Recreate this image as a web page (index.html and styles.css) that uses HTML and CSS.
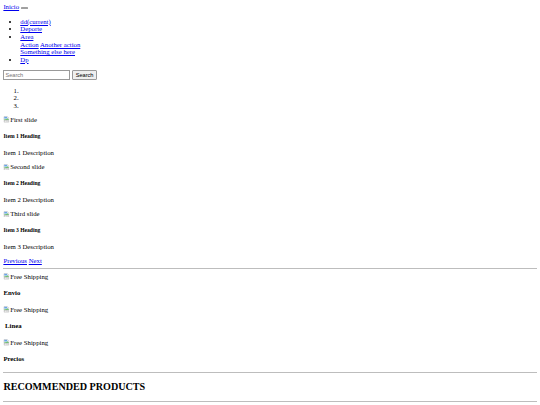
FILE: index.html
```html
<!DOCTYPE html>
<html>
<head>
<meta charset="utf-8">
<title>Inicio</title>
<link rel="stylesheet" href="styles.css">
</head>
<body class="body">
<nav class="navbar">
  <div class="navbar-top">
    <a class="navbar-brand" href="#">Inicio</a>
    <button class="navbar-toggler" type="button"><span class="navbar-toggler-icon"></span></button>
  </div>
  <div class="navbar-collapse">
    <ul class="navbar-nav">
      <li class="nav-item"><a class="nav-link" href="#">dd<span class="sr-only">(current)</span></a></li>
      <li class="nav-item"><a class="nav-link" href="#">Deporte </a></li>
      <li class="nav-item"><a class="nav-link" href="#">Area</a>
        <div class="dropdown-menu">
          <a class="dropdown-item" href="#">Action</a>
          <a class="dropdown-item" href="#">Another action</a>
          <div class="dropdown-divider"></div>
          <a class="dropdown-item" href="#">Something else here</a>
        </div>
      </li>
      <li class="nav-item"><a class="nav-link" href="#">Dp</a></li>
    </ul>
    <form class="search-form">
      <input class="search-input" type="search" placeholder="Search">
      <button class="search-btn" type="submit">Search</button>
    </form>
  </div>
</nav>

<div class="carousel">
  <ol class="carousel-indicators">
    <li></li>
    <li></li>
    <li></li>
  </ol>
  <div class="carousel-inner">
    <div class="carousel-item">
      <div class="broken"><svg class="broken-icon" viewBox="0 0 16 16"><path d="M2.5 1.5h8l3 3v5l-2 1.5-2-1.5-2 1.5-2-1.5-3 1.5z" fill="#fff" stroke="#999"/><rect x="3" y="2" width="7" height="4" fill="#6aa6e8"/><path d="M3 9l2.5-2.5 2 1.5 2.5-2.5 3.5 3v0.5l-1.5 1-2-1.5-2 1.5-2-1.5-3 1.5z" fill="#4caf50"/><path d="M2.5 12.5l3-1.5 2 1.5 2-1.5 2 1.5 2-1.5v3.5h-11z" fill="#fff" stroke="#999"/></svg>First slide</div>
      <div class="carousel-caption">
        <h5 class="caption-title">Item 1 Heading</h5>
        <p class="caption-text">Item 1 Description</p>
      </div>
    </div>
    <div class="carousel-item">
      <div class="broken"><svg class="broken-icon" viewBox="0 0 16 16"><path d="M2.5 1.5h8l3 3v5l-2 1.5-2-1.5-2 1.5-2-1.5-3 1.5z" fill="#fff" stroke="#999"/><rect x="3" y="2" width="7" height="4" fill="#6aa6e8"/><path d="M3 9l2.5-2.5 2 1.5 2.5-2.5 3.5 3v0.5l-1.5 1-2-1.5-2 1.5-2-1.5-3 1.5z" fill="#4caf50"/><path d="M2.5 12.5l3-1.5 2 1.5 2-1.5 2 1.5 2-1.5v3.5h-11z" fill="#fff" stroke="#999"/></svg>Second slide</div>
      <div class="carousel-caption">
        <h5 class="caption-title">Item 2 Heading</h5>
        <p class="caption-text">Item 2 Description</p>
      </div>
    </div>
    <div class="carousel-item">
      <div class="broken"><svg class="broken-icon" viewBox="0 0 16 16"><path d="M2.5 1.5h8l3 3v5l-2 1.5-2-1.5-2 1.5-2-1.5-3 1.5z" fill="#fff" stroke="#999"/><rect x="3" y="2" width="7" height="4" fill="#6aa6e8"/><path d="M3 9l2.5-2.5 2 1.5 2.5-2.5 3.5 3v0.5l-1.5 1-2-1.5-2 1.5-2-1.5-3 1.5z" fill="#4caf50"/><path d="M2.5 12.5l3-1.5 2 1.5 2-1.5 2 1.5 2-1.5v3.5h-11z" fill="#fff" stroke="#999"/></svg>Third slide</div>
      <div class="carousel-caption">
        <h5 class="caption-title">Item 3 Heading</h5>
        <p class="caption-text">Item 3 Description</p>
      </div>
    </div>
  </div>
  <div class="carousel-controls">
    <a class="carousel-control" href="#">Previous</a>
    <a class="carousel-control" href="#">Next</a>
  </div>
</div>

<hr class="rule">

<div class="features">
  <div class="feature">
    <div class="broken"><svg class="broken-icon" viewBox="0 0 16 16"><path d="M2.5 1.5h8l3 3v5l-2 1.5-2-1.5-2 1.5-2-1.5-3 1.5z" fill="#fff" stroke="#999"/><rect x="3" y="2" width="7" height="4" fill="#6aa6e8"/><path d="M3 9l2.5-2.5 2 1.5 2.5-2.5 3.5 3v0.5l-1.5 1-2-1.5-2 1.5-2-1.5-3 1.5z" fill="#4caf50"/><path d="M2.5 12.5l3-1.5 2 1.5 2-1.5 2 1.5 2-1.5v3.5h-11z" fill="#fff" stroke="#999"/></svg>Free Shipping</div>
    <h4 class="feature-title">Envio</h4>
  </div>
  <div class="feature">
    <div class="broken"><svg class="broken-icon" viewBox="0 0 16 16"><path d="M2.5 1.5h8l3 3v5l-2 1.5-2-1.5-2 1.5-2-1.5-3 1.5z" fill="#fff" stroke="#999"/><rect x="3" y="2" width="7" height="4" fill="#6aa6e8"/><path d="M3 9l2.5-2.5 2 1.5 2.5-2.5 3.5 3v0.5l-1.5 1-2-1.5-2 1.5-2-1.5-3 1.5z" fill="#4caf50"/><path d="M2.5 12.5l3-1.5 2 1.5 2-1.5 2 1.5 2-1.5v3.5h-11z" fill="#fff" stroke="#999"/></svg>Free Shipping</div>
    <h4 class="feature-title">&nbsp;Linea</h4>
  </div>
  <div class="feature">
    <div class="broken"><svg class="broken-icon" viewBox="0 0 16 16"><path d="M2.5 1.5h8l3 3v5l-2 1.5-2-1.5-2 1.5-2-1.5-3 1.5z" fill="#fff" stroke="#999"/><rect x="3" y="2" width="7" height="4" fill="#6aa6e8"/><path d="M3 9l2.5-2.5 2 1.5 2.5-2.5 3.5 3v0.5l-1.5 1-2-1.5-2 1.5-2-1.5-3 1.5z" fill="#4caf50"/><path d="M2.5 12.5l3-1.5 2 1.5 2-1.5 2 1.5 2-1.5v3.5h-11z" fill="#fff" stroke="#999"/></svg>Free Shipping</div>
    <h4 class="feature-title">Precios</h4>
  </div>
</div>

<hr class="rule">
<h2 class="section-title">RECOMMENDED PRODUCTS</h2>
<hr class="rule">
</body>
</html>
```

FILE: styles.css
```css
html {
  background: #fff;
}

.body {
  margin: 3.375px;
  font-family: "Liberation Serif", "Times New Roman", serif;
  font-size: 6.75px;
  line-height: 7.6px;
  color: #000;
}

a {
  color: #0000ee;
  text-decoration: underline;
  text-decoration-thickness: 0.5px;
  text-underline-offset: 1px;
}

.navbar-top {
  display: flex;
  align-items: center;
  gap: 1.7px;
  height: 7.6px;
}

.navbar-toggler {
  display: block;
  width: 7px;
  height: 2.6px;
  padding: 0;
  margin: 0;
  margin-top: 1.5px;
  border: 0.5px solid #a0a0a0;
  border-radius: 0.5px;
  background: #e9e9e9;
}

.navbar-toggler-icon {
  display: none;
}

.navbar-nav {
  margin: 6.75px 0;
  padding-left: 16.9px;
  list-style: disc;
}

.dropdown-divider {
  height: 0;
}

.search-form {
  display: flex;
  align-items: center;
  gap: 2.4px;
  height: 10px;
  margin: 0;
}

.search-input {
  box-sizing: border-box;
  width: 66.5px;
  height: 9.4px;
  margin: 0;
  padding: 0 1px;
  font-family: "Liberation Sans", Arial, sans-serif;
  font-size: 5.63px;
  border: 0.6px solid #9a9a9a;
  background: #fff;
}

.search-input::placeholder {
  color: #757575;
}

.search-btn {
  box-sizing: border-box;
  width: 24.6px;
  height: 9.4px;
  margin: 0;
  padding: 0;
  font-family: "Liberation Sans", Arial, sans-serif;
  font-size: 5.63px;
  color: #000;
  border: 0.6px solid #9a9a9a;
  border-radius: 1px;
  background: #efefef;
}

.carousel-indicators {
  margin: 6.75px 0;
  padding-left: 16.9px;
  line-height: 7.5px;
}

.broken {
  display: flex;
  align-items: center;
  height: 7.6px;
}

.broken-icon {
  width: 6.75px;
  height: 6.75px;
  flex: none;
}

.caption-title {
  font-size: 5.6px;
  line-height: 6.44px;
  margin: 9.36px 0;
  font-weight: bold;
}

.caption-text {
  margin: 6.75px 0;
}

.feature-title {
  font-size: 6.75px;
  line-height: 7.6px;
  margin: 8.98px 0;
  font-weight: bold;
}

.rule {
  margin: 3.375px 0;
  height: 0;
  border: none;
  border-top: 0.9px solid #bdbdbd;
}

.section-title {
  font-size: 10.125px;
  line-height: 11.6px;
  margin: 8.4px 0;
  font-weight: bold;
}
```
